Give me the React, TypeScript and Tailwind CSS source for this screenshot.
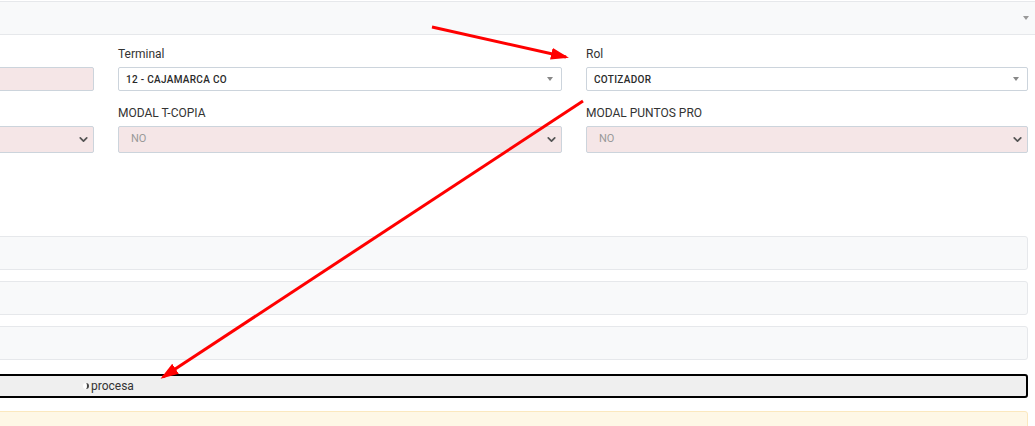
import { ChevronDown } from 'lucide-react';

function Label({ children }: { children: React.ReactNode }) {
    return <div className="mb-[6px] h-[14px] text-[12px] leading-[14px] text-[#333]">{children}</div>;
}

function Select2({ value }: { value: string }) {
    return (
        <div className="flex h-[24px] items-center justify-between rounded-[2px] border border-[#ccd4dc] bg-white pr-[8px] pl-[7px]">
            <span className="text-[10px] font-medium tracking-[0.3px] text-[#2a2a2a]">{value}</span>
            <span className="h-0 w-0 border-x-[3.5px] border-t-[4px] border-x-transparent border-t-[#888]" />
        </div>
    );
}

function PinkSelect({ value }: { value: string }) {
    return (
        <div className="flex h-[27px] items-center justify-between rounded-[2px] border border-[#ccd4dc] bg-[#f5e6e7] pr-[3px] pl-[12px]">
            <span className="text-[11px] text-[#999]">{value}</span>
            <ChevronDown className="h-[13px] w-[13px] text-[#555]" strokeWidth={3.2} />
        </div>
    );
}

function Panel() {
    return <div className="h-[34px] rounded-[3px] border border-[#e6e8eb] bg-[#f8f9fa]" />;
}

export default function App() {
    return (
        <div className="relative h-[426px] w-[1035px] overflow-hidden bg-white" style={{ fontFamily: 'Roboto, "Liberation Sans", sans-serif' }}>
            {/* Top bar */}
            <div className="mt-[1px] flex h-[34px] items-center justify-end border-y border-[#e6e8eb] bg-[#f8f9fa] pr-[6px]">
                <span className="h-0 w-0 border-x-[3.5px] border-t-[4px] border-x-transparent border-t-[#999]" />
            </div>

            <div className="ml-[-349px] w-[1377px]">
                {/* Row 1 */}
                <div className="mt-[12px] grid grid-cols-[443px_444px_442px] gap-x-[24px]">
                    <div>
                        <div className="h-[20px]" />
                        <div className="h-[24px] rounded-[2px] border border-[#ccd4dc] bg-[#f5e6e7]" />
                    </div>
                    <div>
                        <Label>Terminal</Label>
                        <Select2 value="12 - CAJAMARCA CO" />
                    </div>
                    <div>
                        <Label>Rol</Label>
                        <Select2 value="COTIZADOR" />
                    </div>
                </div>

                {/* Row 2 */}
                <div className="mt-[15px] grid grid-cols-[443px_444px_442px] gap-x-[24px]">
                    <div>
                        <div className="h-[20px]" />
                        <PinkSelect value="" />
                    </div>
                    <div>
                        <Label>MODAL T-COPIA</Label>
                        <PinkSelect value="NO" />
                    </div>
                    <div>
                        <Label>MODAL PUNTOS PRO</Label>
                        <PinkSelect value="NO" />
                    </div>
                </div>

                {/* Panels */}
                <div className="mt-[83px] flex flex-col gap-[11px]">
                    <Panel />
                    <Panel />
                    <Panel />
                </div>

                <div className="mt-[14px] flex h-[24px] items-center rounded-[3px] border-2 border-black bg-[#efefef] pl-[430px]">
                    <span className="mr-[2px] inline-block h-[6px] w-[6px] rounded-full border-r-2 border-[#444] bg-white" />
                    <span className="text-[12px] text-[#333]">procesa</span>
                </div>

                <div className="mt-[13px] h-[30px] rounded-[3px] border border-[#fbe8bf] bg-[#fef7e6]" />
            </div>

            {/* Annotation arrows */}
            <svg className="pointer-events-none absolute top-0 left-0" width="1035" height="426">
                <defs>
                    <marker id="head" markerWidth="6" markerHeight="4" refX="5" refY="2" orient="auto" markerUnits="strokeWidth">
                        <polygon points="0 0, 6 2, 0 4" fill="#ff0000" />
                    </marker>
                </defs>
                <line x1="432" y1="27" x2="566" y2="57" stroke="#ff0000" strokeWidth="3" markerEnd="url(#head)" />
                <line x1="583" y1="101" x2="163" y2="377" stroke="#ff0000" strokeWidth="3" markerEnd="url(#head)" />
            </svg>
        </div>
    );
}
